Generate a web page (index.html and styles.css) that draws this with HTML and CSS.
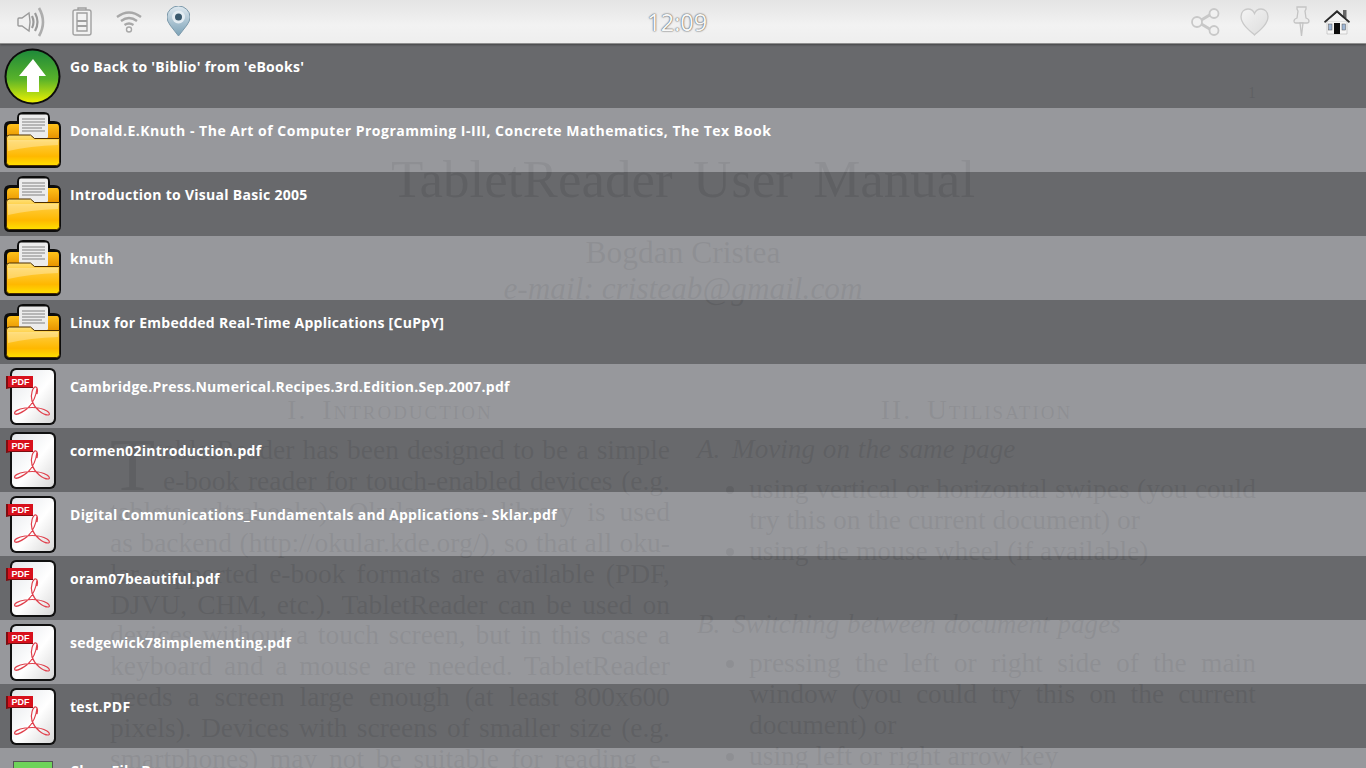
FILE: index.html
```html
<!DOCTYPE html>
<html lang="en">
<head>
  <meta charset="UTF-8">
  <title>TabletReader</title>
  <link rel="stylesheet" href="styles.css">
</head>
<body>
  <svg class="defs" width="0" height="0">
    <defs>
      <linearGradient id="upFill" x1="0" y1="0" x2="0" y2="1">
        <stop offset="0" stop-color="#1f8a3a"/>
        <stop offset="0.55" stop-color="#58b22a"/>
        <stop offset="0.85" stop-color="#b9dc10"/>
        <stop offset="1" stop-color="#eef000"/>
      </linearGradient>
      <linearGradient id="folderFill" x1="0" y1="0" x2="0" y2="1">
        <stop offset="0" stop-color="#ffe27a"/>
        <stop offset="0.25" stop-color="#ffcb3a"/>
        <stop offset="0.7" stop-color="#ffb800"/>
        <stop offset="1" stop-color="#ffdf00"/>
      </linearGradient>
      <linearGradient id="folderBack" x1="0" y1="0" x2="0" y2="1">
        <stop offset="0" stop-color="#ffc21a"/>
        <stop offset="1" stop-color="#e89400"/>
      </linearGradient>
      <linearGradient id="pdfPaper" x1="0" y1="0" x2="1" y2="1">
        <stop offset="0" stop-color="#e3e6ea"/>
        <stop offset="0.55" stop-color="#ffffff"/>
        <stop offset="1" stop-color="#d8d8d8"/>
      </linearGradient>
      <linearGradient id="pinFill" x1="0" y1="0" x2="0" y2="1">
        <stop offset="0" stop-color="#dfe9f0"/>
        <stop offset="1" stop-color="#7ba1b6"/>
      </linearGradient>
      <linearGradient id="heartFill" x1="0" y1="0" x2="1" y2="1">
        <stop offset="0" stop-color="#f4f4f4"/>
        <stop offset="1" stop-color="#dcdcdc"/>
      </linearGradient>

      <symbol id="i-folder" viewBox="0 0 64 64">
        <path d="M4 19q0-6 6-6h7V10q0-6 6-6h21q6 0 6 6v3h4q7 0 7 6v35q0 6-6 6H10q-6 0-6-6z" fill="#0d0d0d"/>
        <path d="M7 20q0-4 4-4h46q2 0 2 4v10H7z" fill="url(#folderBack)"/>
        <rect x="19" y="6.500" width="29" height="24" rx="2" fill="#ececec"/>
        <path d="M22 11h23M22 14h23M22 17h23M22 20h20M22 23h23" stroke="#808080" stroke-width="1.100"/>
        <path d="M6.500 30q0-3 3-3h21l4 3.500h25v24q0 3-3 3h-47q-3 0-3-3z" fill="url(#folderFill)" stroke="#4a2c00" stroke-width="1"/>
        <path d="M8 32h50v5Q30 38 8 43z" fill="#fff" opacity="0.3"/>
      </symbol>

      <symbol id="i-pdf" viewBox="0 0 64 64">
        <rect x="10" y="4" width="46" height="57" rx="6" fill="#111"/>
        <rect x="12" y="6" width="42" height="53" rx="4.500" fill="url(#pdfPaper)"/>
        <path d="M6 12h27v12H11l-5 1z" fill="#7d0d10"/>
        <rect x="8" y="12" width="25" height="11" fill="#d8101c"/>
        <text x="20.500" y="21" class="badge-text">PDF</text>
        <path d="M37 24c-1 9-4 15-9 20-5 4-11 7-13 6-2-2 3-5 10-6 8-1 17 0 22 3 3 2 3 4 1 4-5 0-13-6-16-14-2-6 1-15 4-14 2 1 2 3 1 7" fill="none" stroke="#e0404c" stroke-width="1.200"/>
      </symbol>

      <symbol id="i-up" viewBox="0 0 64 64">
        <circle cx="32.500" cy="32.500" r="28" fill="#0c0c0c"/>
        <circle cx="32.500" cy="32.500" r="26" fill="url(#upFill)"/>
        <path d="M33 15L46 32h-7v16H27V32h-8z" fill="#fff"/>
      </symbol>
    </defs>
  </svg>

  <header class="topbar">
    <div class="icons icons-left">
      <svg class="ico" width="30" height="32" viewBox="0 0 30 32" fill="none" stroke="#9a9a9a" stroke-width="1.400">
        <path d="M1 13q0-1 1-1h3l7-5q1 8 1 9t-1 9l-7-5H2q-1 0-1-1z" fill="#f0f0f0"/>
        <path d="M15 10q3 6 0 12M18 7q5 9 0 18" stroke-width="2.200"/>
        <path d="M22 2q8 14 0 28" stroke="#adadad" stroke-width="2.600"/>
      </svg>
      <svg class="ico" width="20" height="29" viewBox="0 0 20 29" fill="none" stroke="#a0a0a0" stroke-width="1.400">
        <path d="M3 3h14q2 0 2 2v21q0 2-2 2H3q-2 0-2-2V5q0-2 2-2z" fill="#f2f2f2"/>
        <path d="M6 3V1h8v2M5 6h10v18H5z"/>
        <path d="M5 14h10M5 19h10" stroke-width="2"/>
      </svg>
      <svg class="ico" width="26" height="23" viewBox="0 0 26 23" fill="none" stroke="#a8a8a8" stroke-width="2.300">
        <path d="M1 7q12-9 24 0M5 11q8-6 16 0M8.500 15q4.500-3 9 0"/>
        <circle cx="13" cy="19.500" r="2.500" fill="#f6f6f6" stroke-width="1.400"/>
      </svg>
      <svg class="ico" width="23" height="31" viewBox="0 0 23 31">
        <path d="M11.500 30L3 19Q0 15 0 11a11.500 11 0 0 1 23 0q0 4-3 8z" fill="url(#pinFill)" stroke="#7d9aab"/>
        <circle cx="11.500" cy="11" r="6.500" fill="#e3ecf2"/>
        <circle cx="11.500" cy="11" r="3.500" fill="#39596d"/>
      </svg>
    </div>
    <div class="clock">12:09</div>
    <div class="icons icons-right">
      <svg class="ico share" width="29" height="28" viewBox="0 0 29 28" fill="#f1f1f1" stroke="#c8c8c8" stroke-width="1.800">
        <path d="M7 14L22 5M7 14L22 23" fill="none" stroke-width="3"/>
        <circle cx="6" cy="14" r="5"/>
        <circle cx="23" cy="5.500" r="4.500"/>
        <circle cx="23" cy="22.500" r="4.500"/>
      </svg>
      <svg class="ico heart" width="29" height="28" viewBox="0 0 29 28" fill="url(#heartFill)" stroke="#c9c9c9" stroke-width="1.300">
        <path d="M14.500 27C9 22 1 16 1 8.500 1 3.500 4.500 1 8 1c3 0 5.500 2 6.500 4.500C15.500 3 18 1 21 1c3.500 0 7 2.500 7 7.500C28 16 20 22 14.500 27z"/>
      </svg>
      <svg class="ico pin" width="17" height="31" viewBox="0 0 17 31" fill="#ececec" stroke="#c4c4c4" stroke-width="1.300">
        <path d="M4 1h9v2l-1 2 1 7q3 1 3 3t-2 2H3q-2 0-2-2t3-3l1-7-1-2z"/>
        <path d="M7 17h3l-1.500 13z"/>
      </svg>
      <svg class="ico home" width="26" height="26" viewBox="0 0 26 26">
        <rect x="19" y="1" width="3.500" height="8" fill="#666"/>
        <path d="M3 12h20v13H3z" fill="#f6f6f6" stroke="#b5b5b5" stroke-width="0.600"/>
        <path d="M0 12.500L13 1l13 11.500-1 1.500L13 4 1 14z" fill="#2b2b2b"/>
        <path d="M13 4L4 12h18z" fill="#f2f2f2"/>
        <rect x="10" y="14" width="6" height="11" fill="#0e0e0e"/>
        <rect x="4.500" y="15" width="3.500" height="6" fill="#9fb7d6" stroke="#555" stroke-width="0.500"/>
        <rect x="18" y="15" width="3.500" height="6" fill="#9fb7d6" stroke="#555" stroke-width="0.500"/>
      </svg>
    </div>
  </header>

  <main class="reader">
    <div class="page-number">1</div>
    <h1 class="doc-title">TabletReader User Manual</h1>
    <div class="doc-author">Bogdan Cristea</div>
    <div class="doc-email">e-mail: cristeab@gmail.com</div>

    <div class="doc-columns">
      <section>
        <h2 class="doc-heading">I. Introduction</h2>
        <div class="para">
          <span class="dropcap">T</span>
          <div class="ln">abletReader has been designed to be a simple</div>
          <div class="ln">e-book reader for touch-enabled devices (e.g.</div>
          <div class="ln">tablets, ultrabooks). Okular core library is used</div>
          <div class="ln">as backend (http://okular.kde.org/), so that all oku-</div>
          <div class="ln">lar supported e-book formats are available (PDF,</div>
          <div class="ln">DJVU, CHM, etc.). TabletReader can be used on</div>
          <div class="ln">devices without a touch screen, but in this case a</div>
          <div class="ln">keyboard and a mouse are needed. TabletReader</div>
          <div class="ln">needs a screen large enough (at least 800x600</div>
          <div class="ln">pixels). Devices with screens of smaller size (e.g.</div>
          <div class="ln">smartphones) may not be suitable for reading e-</div>
        </div>
      </section>
      <section>
        <h2 class="doc-heading">II. Utilisation</h2>
        <h3 class="doc-sub"><span class="sub-num">A.</span>Moving on the same page</h3>
        <ul class="doc-list">
          <li><div class="ln">using vertical or horizontal swipes (you could</div><div>try this on the current document) or</div></li>
          <li>using the mouse wheel (if available)</li>
        </ul>
        <h3 class="doc-sub doc-sub-b"><span class="sub-num">B.</span>Switching between document pages</h3>
        <ul class="doc-list">
          <li><div class="ln">pressing the left or right side of the main</div><div class="ln">window (you could try this on the current</div><div>document) or</div></li>
          <li>using left or right arrow key</li>
        </ul>
      </section>
    </div>

    <ul class="file-list">
      <li class="row"><svg class="row-icon"><use href="#i-up"/></svg><span class="row-name">Go Back to 'Biblio' from 'eBooks'</span></li>
      <li class="row"><svg class="row-icon"><use href="#i-folder"/></svg><span class="row-name row-name-wide">Donald.E.Knuth - The Art of Computer Programming I-III, Concrete Mathematics, The Tex Book</span></li>
      <li class="row"><svg class="row-icon"><use href="#i-folder"/></svg><span class="row-name">Introduction to Visual Basic 2005</span></li>
      <li class="row"><svg class="row-icon"><use href="#i-folder"/></svg><span class="row-name">knuth</span></li>
      <li class="row"><svg class="row-icon"><use href="#i-folder"/></svg><span class="row-name">Linux for Embedded Real-Time Applications [CuPpY]</span></li>
      <li class="row"><svg class="row-icon"><use href="#i-pdf"/></svg><span class="row-name">Cambridge.Press.Numerical.Recipes.3rd.Edition.Sep.2007.pdf</span></li>
      <li class="row"><svg class="row-icon"><use href="#i-pdf"/></svg><span class="row-name">cormen02introduction.pdf</span></li>
      <li class="row"><svg class="row-icon"><use href="#i-pdf"/></svg><span class="row-name">Digital Communications_Fundamentals and Applications - Sklar.pdf</span></li>
      <li class="row"><svg class="row-icon"><use href="#i-pdf"/></svg><span class="row-name">oram07beautiful.pdf</span></li>
      <li class="row"><svg class="row-icon"><use href="#i-pdf"/></svg><span class="row-name">sedgewick78implementing.pdf</span></li>
      <li class="row"><svg class="row-icon"><use href="#i-pdf"/></svg><span class="row-name">test.PDF</span></li>
      <li class="row"><div class="clear-icon"></div><span class="row-name">Clear File B</span></li>
    </ul>
  </main>
</body>
</html>
```

FILE: styles.css
```css
html, body {
  margin: 0;
  height: 768px;
  overflow: hidden;
  background-color: #ffffff;
}

.defs {
  position: absolute;
}

.topbar {
  position: relative;
  z-index: 2;
  display: flex;
  align-items: center;
  justify-content: space-between;
  box-sizing: border-box;
  height: 44px;
  padding: 0 16px 0 17px;
  background: linear-gradient(#e4e4e4, #f2f2f2 60%, #eeeeee);
  border-bottom: 1px solid #8f8f8f;
  box-shadow: 0 1px 2px rgba(0,0,0,0.35);
}

.icons {
  display: flex;
  align-items: center;
}

.icons-left {
  gap: 24.500px;
}

.share {
  margin-right: 20px;
}

.heart {
  margin-right: 24px;
}

.pin {
  margin-right: 14px;
}

.clock {
  margin-right: 26px;
  font-family: "Open Sans", sans-serif;
  font-size: 23.500px;
  color: #f8f8f8;
  text-shadow: 0 0 2px #555, 0 0 1px #555;
}

.reader {
  position: relative;
  height: 724px;
  overflow: hidden;
  padding: 0 110px;
  font-family: "Liberation Serif", serif;
  color: #111;
}

.page-number {
  position: absolute;
  right: 110px;
  top: 40px;
  font-size: 16px;
}

.doc-title {
  margin: 0;
  padding-top: 105px;
  font-size: 53px;
  font-weight: normal;
  line-height: 60px;
  word-spacing: 7px;
  text-align: center;
}

.doc-author {
  margin-top: 26px;
  font-size: 31.500px;
  line-height: 36px;
  text-align: center;
}

.doc-email {
  font-size: 31.300px;
  font-style: italic;
  line-height: 36px;
  text-align: center;
}

.doc-columns {
  display: grid;
  grid-template-columns: 560px 559px;
  column-gap: 27px;
  margin-top: 87px;
}

.doc-heading {
  margin: 0 0 10px;
  font-size: 27.500px;
  font-weight: normal;
  font-variant: small-caps;
  line-height: 31px;
  letter-spacing: 2px;
  word-spacing: 6px;
  text-align: center;
}

.para {
  font-size: 27.500px;
  line-height: 30.900px;
}

.ln {
  white-space: nowrap;
  text-align: justify;
  text-align-last: justify;
}

.dropcap {
  float: left;
  width: 53px;
  height: 61px;
  font-size: 74px;
  line-height: 60px;
}

.doc-sub {
  margin: -1px 0 0;
  font-size: 27.200px;
  font-weight: normal;
  font-style: italic;
  line-height: 31px;
  word-spacing: 1px;
}

.sub-num {
  display: inline-block;
  width: 35px;
}

.doc-sub-b {
  margin-top: 43px;
}

.doc-list {
  margin: 8px 0 0;
  padding-left: 52px;
  font-size: 27.500px;
  line-height: 31px;
}

.doc-sub-b + .doc-list {
  margin-top: 7px;
}

.file-list {
  position: absolute;
  top: 0;
  left: 0;
  right: 0;
  margin: 0;
  padding: 0;
  list-style: none;
}

.row {
  display: flex;
  height: 64px;
  font-family: "Open Sans", sans-serif;
  background-color: rgba(98,99,103,0.965);
}

.row:nth-child(even) {
  background-color: rgba(147,148,152,0.965);
}

.row-icon {
  flex: none;
  width: 64px;
  height: 64px;
}

.row-name {
  margin: 13px 0 0 6px;
  font-size: 14px;
  font-weight: 700;
  line-height: 20px;
  letter-spacing: 0.280px;
  color: #ffffff;
}

.row-name-wide {
  letter-spacing: 0.510px;
}

.clear-icon {
  flex: none;
  box-sizing: border-box;
  width: 40px;
  height: 30px;
  margin: 13px 11px 0 13px;
  background-color: #6fd35a;
  border: 1px solid #555;
}

.badge-text {
  font-family: "Liberation Sans", sans-serif;
  font-size: 9px;
  font-weight: 700;
  fill: #ffffff;
  text-anchor: middle;
}
```
